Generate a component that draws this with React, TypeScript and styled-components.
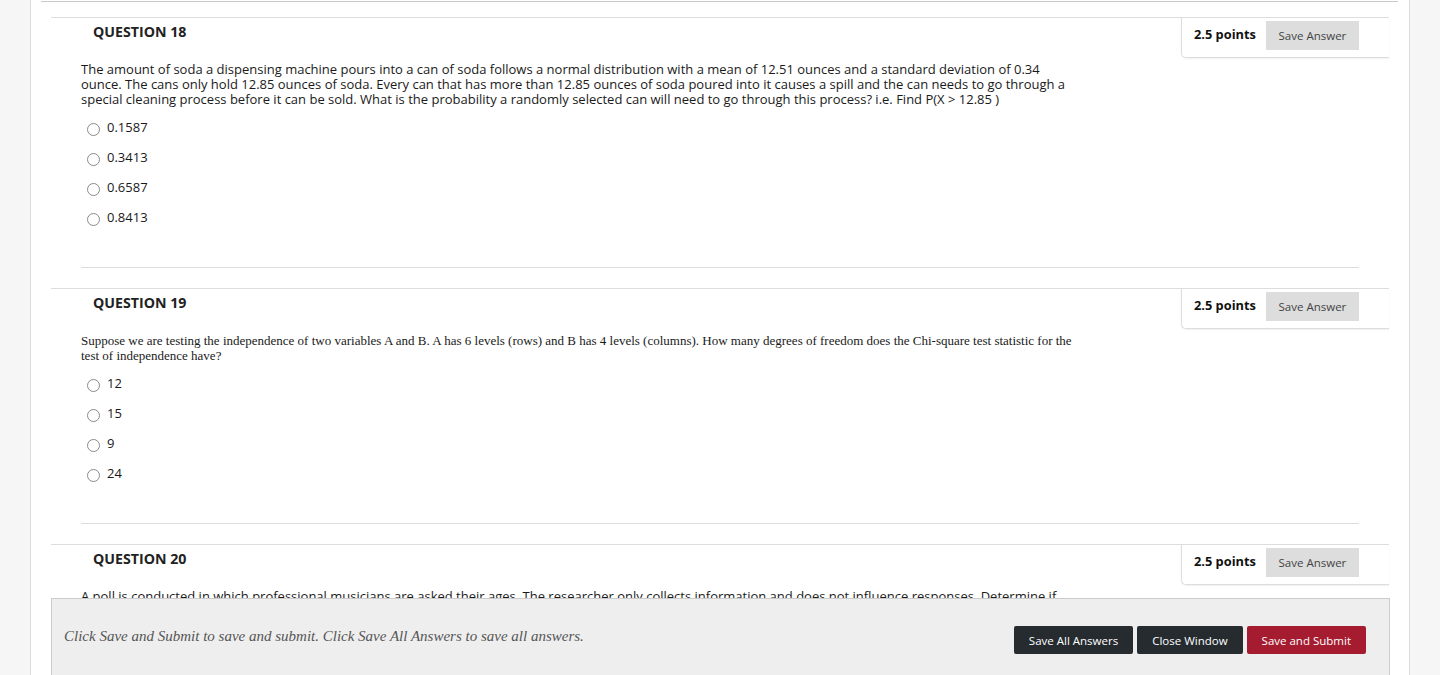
import styled, { createGlobalStyle } from "styled-components";

type Question = {
  number: number;
  text: string;
  serif?: boolean;
  options: string[];
};

const QUESTIONS: Question[] = [
  {
    number: 18,
    text:
      "The amount of soda a dispensing machine pours into a can of soda follows a normal distribution with a mean of 12.51 ounces and a standard deviation of 0.34 ounce. The cans only hold 12.85 ounces of soda. Every can that has more than 12.85 ounces of soda poured into it causes a spill and the can needs to go through a special cleaning process before it can be sold. What is the probability a randomly selected can will need to go through this process? i.e. Find P(X > 12.85 )",
    options: ["0.1587", "0.3413", "0.6587", "0.8413"],
  },
  {
    number: 19,
    serif: true,
    text:
      "Suppose we are testing the independence of two variables A and B. A has 6 levels (rows) and B has 4 levels (columns). How many degrees of freedom does the Chi-square test statistic for the test of independence have?",
    options: ["12", "15", "9", "24"],
  },
  {
    number: 20,
    text:
      "A poll is conducted in which professional musicians are asked their ages. The researcher only collects information and does not influence responses.  Determine if the study is an observational study or a designed experiment.",
    options: ["Observational study", "Designed experiment"],
  },
];

const GlobalStyle = createGlobalStyle`
  html, body {
    margin: 0;
    padding: 0;
    background: #f6f6f6;
    font-family: "Open Sans", "Liberation Sans", sans-serif;
    color: #222;
  }
`;

const App = () => {
  return (
    <>
      <GlobalStyle />
      <Page>
        <TopRule />
        <QuestionList>
          {QUESTIONS.map((q) => (
            <QuestionItem key={q.number}>
              <Header>
                <Title>QUESTION {q.number}</Title>
                <PointsBox>
                  <Points>2.5 points</Points>
                  <SaveAnswer>Save Answer</SaveAnswer>
                </PointsBox>
              </Header>
              <Body $serif={!!q.serif}>{q.text}</Body>
              <Options>
                {q.options.map((opt) => (
                  <Option key={opt}>
                    <Radio type="radio" name={`q${q.number}`} />
                    <span>{opt}</span>
                  </Option>
                ))}
              </Options>
              <Separator />
            </QuestionItem>
          ))}
        </QuestionList>
      </Page>
      <Footer>
        <FooterNote>
          Click Save and Submit to save and submit. Click Save All Answers to save all answers.
        </FooterNote>
        <FooterActions>
          <ActionButton $variant="dark">Save All Answers</ActionButton>
          <ActionButton $variant="dark">Close Window</ActionButton>
          <ActionButton $variant="primary">Save and Submit</ActionButton>
        </FooterActions>
      </Footer>
    </>
  );
};

const Page = styled.div`
  margin: 0 30px;
  min-height: 900px;
  background: #fff;
  border-left: 1px solid #dcdcdc;
  border-right: 1px solid #dcdcdc;
`;

const TopRule = styled.div`
  height: 1px;
  margin: 0 11px 0 10px;
  border-bottom: 1px solid #c8c8c8;
`;

const QuestionList = styled.ul`
  list-style: none;
  margin: 0;
  padding: 15px 20px 0 20px;
`;

const QuestionItem = styled.li`
  border-top: 1px solid #dddddd;
  padding-bottom: 20px;
`;

const Header = styled.div`
  display: flex;
  justify-content: space-between;
  align-items: flex-start;
  height: 39px;
`;

const Title = styled.h2`
  margin: 0;
  padding: 3px 0 0 42px;
  font-size: 14.2px;
  line-height: 22px;
  font-weight: 700;
  color: #222;
`;

const PointsBox = styled.div`
  display: flex;
  align-items: flex-start;
  gap: 10px;
  box-sizing: border-box;
  width: 208px;
  height: 40px;
  padding: 3px 30px 0 12px;
  border-left: 1px solid #dddddd;
  border-bottom: 1px solid #dddddd;
  border-bottom-left-radius: 5px;
  box-shadow: 0 1px 2px rgba(0, 0, 0, 0.06);
`;

const Points = styled.span`
  font-size: 12.8px;
  font-weight: 700;
  line-height: 26px;
  color: #111;
  white-space: nowrap;
`;

const SaveAnswer = styled.button`
  height: 29px;
  width: 94px;
  padding: 0;
  border: none;
  background: #dddddd;
  color: #444;
  font-family: "Open Sans", "Liberation Sans", sans-serif;
  font-size: 11.5px;
  white-space: nowrap;
  cursor: pointer;
`;

const Body = styled.div<{ $serif: boolean }>`
  margin-top: 5px;
  padding-left: 30px;
  max-width: 993px;
  font-family: ${(p) =>
    p.$serif
      ? '"Liberation Serif", "Times New Roman", serif'
      : '"Open Sans", "Liberation Sans", sans-serif'};
  font-size: 13px;
  line-height: 15px;
  color: #1a1a1a;
`;

const Options = styled.div`
  margin-top: 5px;
  padding-left: 36px;
`;

const Option = styled.label`
  display: flex;
  align-items: center;
  gap: 7px;
  height: 30px;
  font-size: 13px;
  color: #1a1a1a;
`;

const Radio = styled.input`
  appearance: none;
  flex: none;
  width: 13px;
  height: 13px;
  margin: 5px 0 0 0;
  border: 1px solid #8a8a8a;
  border-radius: 50%;
  background: #fff;
`;

const Separator = styled.hr`
  margin: 35px 30px 0 30px;
  border: none;
  border-top: 1px solid #dddddd;
`;

const Footer = styled.div`
  position: fixed;
  left: 51px;
  bottom: 0;
  box-sizing: border-box;
  width: 1339px;
  height: 77px;
  display: flex;
  align-items: center;
  justify-content: space-between;
  padding: 0 23px 0 12px;
  background: #eeeeee;
  border: 1px solid #cccccc;
  border-bottom: none;
`;

const FooterNote = styled.p`
  margin: 0 0 2px 0;
  font-family: "Liberation Serif", Georgia, serif;
  font-style: italic;
  font-size: 15px;
  color: #555;
`;

const FooterActions = styled.div`
  display: flex;
  gap: 4px;
  margin-top: 6px;
`;

const ActionButton = styled.button<{ $variant: "dark" | "primary" }>`
  height: 28px;
  padding: 0 15px;
  border: none;
  border-radius: 2px;
  background: ${(p) => (p.$variant === "primary" ? "#a51c30" : "#262b30")};
  color: #fff;
  font-family: "Open Sans", "Liberation Sans", sans-serif;
  font-size: 11.5px;
  white-space: nowrap;
  cursor: pointer;
`;

export default App;
